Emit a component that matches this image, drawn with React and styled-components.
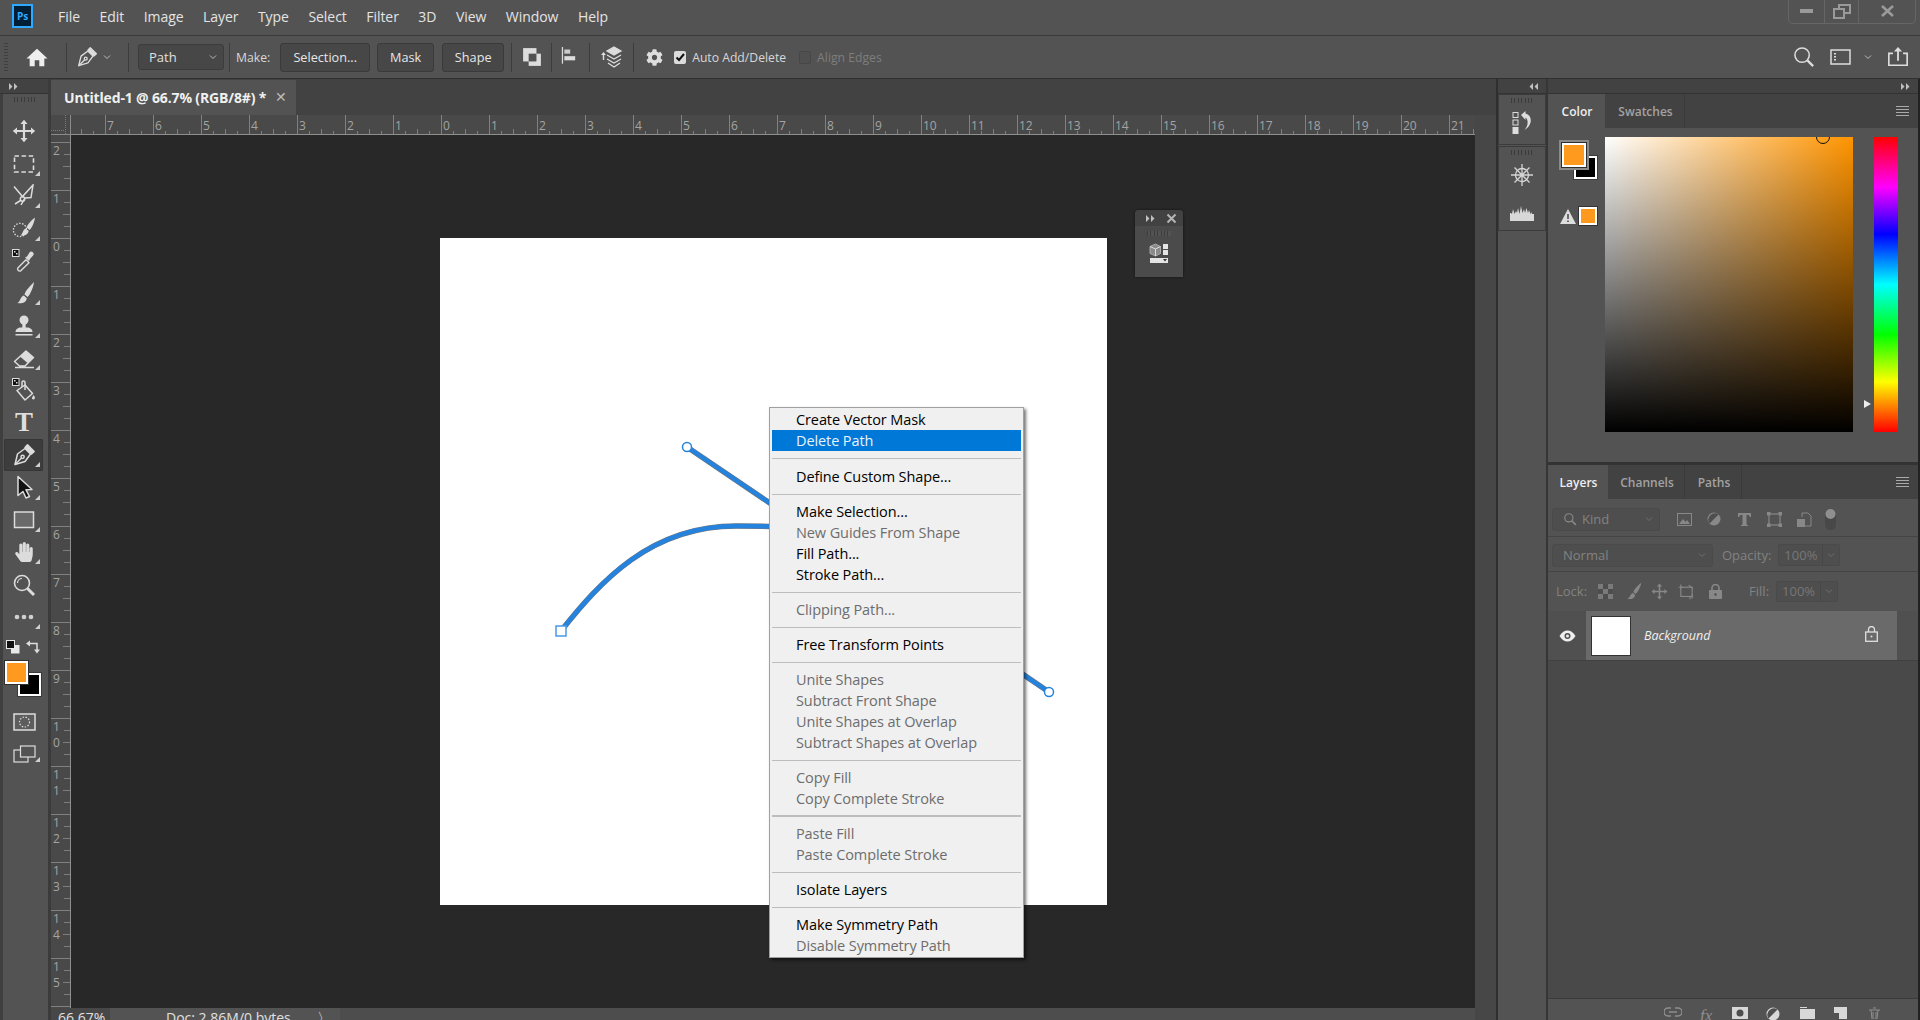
import React from 'react';
import styled, { createGlobalStyle } from 'styled-components';
import { FaCog, FaHandPaper } from 'react-icons/fa';

const UI = '"Open Sans","Noto Sans","Liberation Sans",sans-serif';
const G = createGlobalStyle`
  html,body{margin:0;padding:0;background:#535353;overflow:hidden;}
  #root{height:100vh;}
  *{box-sizing:border-box;}
`;
const App_ = styled.div`width:1920px;height:1020px;display:flex;flex-direction:column;overflow:hidden;background:#535353;font-family:${UI};font-size:13px;color:#e0e0e0;`;

/* Menu bar */
const MenuBar = styled.div`height:36px;flex:none;display:flex;align-items:center;padding-left:12px;border-bottom:1px solid #3c3c3c;position:relative;`;
const Logo = styled.div`width:21px;height:24px;border:2px solid #31a8ff;background:#001e36;color:#31a8ff;font-size:10px;font-weight:700;display:flex;align-items:center;justify-content:center;margin-right:25px;margin-top:-4px;`;
const MenuItems = styled.div`display:flex;gap:19.5px;font-size:14px;color:#e4e4e4;margin-top:-2px;letter-spacing:-.05px;`;
const WinControls = styled.div`margin-left:auto;margin-right:4px;width:128px;height:24px;margin-top:-12px;border:1px solid #666;border-top:none;border-radius:0 0 5px 5px;display:grid;grid-template-columns:35px 34px 1fr;`;
const WinBtn = styled.div`display:flex;align-items:center;justify-content:center;border-left:${p=>p.$first?'none':'1px solid #666'};`;

/* Options */
const Options = styled.div`height:43px;flex:none;display:flex;align-items:center;position:relative;border-bottom:1px solid #2f2f2f;padding-left:4px;`;
const Grip = styled.div`width:4px;height:28px;flex:none;background:repeating-linear-gradient(#3f3f3f 0 1px,transparent 1px 3px);`;
const HomeSlot = styled.div`width:58px;display:flex;justify-content:center;flex:none;`;
const VSep = styled.div`width:1px;height:29px;background:#3c3c3c;flex:none;margin:${p=>p.$m||'0'};`;
const PenSlot = styled.div`width:61px;display:flex;align-items:center;gap:5px;padding-left:9px;flex:none;`;
const PathSelect = styled.div`width:86px;height:26px;margin-left:9px;margin-right:5px;background:#474747;border:1px solid #3c3c3c;border-radius:3px;display:flex;align-items:center;justify-content:space-between;padding:0 6px 0 10px;font-size:13px;flex:none;`;
const OptLabel = styled.span`font-size:12.2px;color:${p=>p.$dim?'#7e7e7e':'#d8d8d8'};margin-left:${p=>p.$ml||0}px;flex:none;`;
const OptBtn = styled.div`height:29px;width:${p=>p.$w}px;margin-left:${p=>p.$ml}px;border:1px solid #3a3a3a;border-radius:3px;background:#474747;display:flex;align-items:center;justify-content:center;font-size:12.7px;color:#e6e6e6;flex:none;`;
const OptIcon = styled.div`width:${p=>p.$w}px;flex:none;display:flex;justify-content:center;align-items:center;position:relative;`;
const Check = styled.div`width:12px;height:13px;border-radius:2px;flex:none;margin-left:${p=>p.$ml||0}px;background:${p=>p.$on?'#dcdcdc':'#505050'};border:${p=>p.$on?'none':'1px solid #474747'};display:flex;align-items:center;justify-content:center;`;
const OptRight = styled.div`margin-left:auto;display:flex;align-items:center;margin-right:2px;`;

/* Workspace */
const Workspace = styled.div`flex:1;min-height:0;display:flex;`;
const LeftCol = styled.div`width:51px;flex:none;display:flex;flex-direction:column;border-right:3px solid #3b3b3b;`;
const Collapse = styled.div`height:15px;flex:none;background:#424242;display:flex;align-items:center;padding-left:9px;border-bottom:1px solid #333;justify-content:${p=>p.$end?'flex-end':'flex-start'};padding-right:${p=>p.$end?'8px':'0'};`;
const ToolBox = styled.div`flex:1;border-left:3px solid #3f3f3f;display:flex;flex-direction:column;align-items:stretch;position:relative;`;
const Gripper = styled.div`width:${p=>p.$w||23}px;height:5px;flex:none;margin:${p=>p.$m||'3px auto 0'};background:repeating-linear-gradient(to right,#3b3b3b 0 1px,#535353 1px 3.4px);`;
const ToolList = styled.div`margin-top:13px;display:flex;flex-direction:column;`;
const Tool = styled.div`height:32.4px;margin:0 ${p=>p.$active?'5px':'0'} 0 ${p=>p.$active?'1px':'0'};padding-right:${p=>p.$active?'0':'3px'};display:flex;align-items:center;justify-content:center;position:relative;border-radius:2px;
  background:${p=>p.$active?'#3d3d3d':'transparent'};
  ${p=>p.$active?'box-shadow:inset 0 0 0 1px #363636;':''}
  ${p=>p.$fly?`&::after{content:'';position:absolute;right:${p.$active?3:8}px;bottom:4px;border-bottom:5px solid #cfcfcf;border-left:5px solid transparent;}`:''}`;
const TypeGlyph = styled.span`font-family:"Liberation Serif",serif;font-size:27px;line-height:1;color:#dedede;font-weight:700;`;
const ColorTools = styled.div`display:flex;justify-content:space-between;padding:0 8px 0 3px;margin-top:7px;height:14px;`;
const FgSwatch = styled.div`width:${p=>p.$s}px;height:${p=>p.$s}px;background:#ff9a1f;border:2px solid #fff;box-shadow:0 0 0 1px #2e2e2e${p=>p.$halo?',0 0 0 3px #8a8a8a':''};position:relative;z-index:1;`;
const BgSwatch = styled.div`width:${p=>p.$s}px;height:${p=>p.$s}px;background:#000;border:2px solid #fff;outline:1px solid #3a3a3a;margin:${p=>p.$m};`;
const ToolSwatches = styled.div`padding-left:2px;margin-top:7px;height:36px;`;
const ModeIcon = styled.div`height:${p=>p.$h}px;margin-top:${p=>p.$mt||0}px;padding-right:3px;display:flex;align-items:center;justify-content:center;position:relative;
 ${p=>p.$fly?`&::after{content:'';position:absolute;right:8px;bottom:2px;border-bottom:5px solid #cfcfcf;border-left:5px solid transparent;}`:''}`;

/* Document area */
const DocArea = styled.div`flex:1;min-width:0;display:flex;flex-direction:column;background:#424242;border-right:2px solid #2f2f2f;`;
const TabBar = styled.div`height:36px;flex:none;background:#424242;display:flex;padding-top:1px;`;
const DocTab = styled.div`width:245px;background:#535353;display:flex;align-items:center;padding-left:13px;font-weight:700;font-size:14px;color:#f0f0f0;letter-spacing:-.15px;`;
const TabClose = styled.span`margin-left:9px;color:#bbb;font-size:14px;font-weight:400;margin-top:-3px;`;
const DocMain = styled.div`flex:1;min-height:0;display:flex;`;
const DocCenter = styled.div`flex:1;min-width:0;display:flex;flex-direction:column;`;
const DocScrollV = styled.div`width:21px;flex:none;background:#474747;`;
const RulerRow = styled.div`height:20px;flex:none;display:flex;background:#494949;`;
const Corner = styled.div`width:20px;flex:none;border-right:1px solid #8a8a8a;border-bottom:1px solid #8a8a8a;background:repeating-linear-gradient(to right,#7a7a7a 0 1px,transparent 1px 2px) 0 15px/14px 1px no-repeat,repeating-linear-gradient(#7a7a7a 0 1px,transparent 1px 2px) 14px 0/1px 20px no-repeat;`;
const TopRuler = styled.div`flex:1;min-width:0;display:flex;overflow:hidden;border-bottom:1px solid #8f8f8f;`;
const TopCell = styled.div`flex:0 0 48px;margin-left:${p=>p.$ml||0}px;border-left:1px solid #808080;padding-left:1px;font-size:12px;line-height:22px;color:#a4a4a4;
  background:linear-gradient(#7e7e7e,#7e7e7e) 11px 100%/1px 3px no-repeat,linear-gradient(#7e7e7e,#7e7e7e) 23px 100%/1px 5px no-repeat,linear-gradient(#7e7e7e,#7e7e7e) 35px 100%/1px 3px no-repeat;`;
const DocBody = styled.div`flex:1;min-height:0;display:flex;`;
const LeftRuler = styled.div`width:20px;flex:none;background:#494949;overflow:hidden;display:flex;flex-direction:column;border-right:1px solid #8f8f8f;`;
const LeftCell = styled.div`flex:0 0 48px;margin-top:${p=>p.$mt||0}px;border-top:1px solid #808080;padding-left:2px;font-size:12px;line-height:16px;color:#a4a4a4;display:flex;flex-direction:column;
  background:linear-gradient(#7e7e7e,#7e7e7e) 100% 11px/6px 1px no-repeat,linear-gradient(#7e7e7e,#7e7e7e) 100% 23px/7px 1px no-repeat,linear-gradient(#7e7e7e,#7e7e7e) 100% 35px/6px 1px no-repeat;`;
const Canvas = styled.div`flex:1;min-width:0;background:#282828;position:relative;padding:103px 0 0 369px;overflow:hidden;`;
const DocPage = styled.div`width:667px;height:667px;background:#fff;position:relative;`;
const PathSvg = styled.svg`position:absolute;left:0;top:0;overflow:visible;`;
const FloatPanel = styled.div`position:absolute;left:1064px;top:75px;width:48px;height:67px;background:#4b4b4b;border-radius:4px 4px 0 0;box-shadow:0 0 3px rgba(0,0,0,.5);display:flex;flex-direction:column;align-items:center;`;
const FloatHead = styled.div`height:16px;width:100%;flex:none;background:#424242;border-radius:4px 4px 0 0;display:flex;align-items:center;justify-content:space-between;padding:0 6px 0 11px;color:#bbb;`;
const FloatIcon = styled.div`margin-top:7px;`;
const ContextMenu = styled.div`position:absolute;left:698px;top:272px;width:255px;height:551px;background:#f0f0f0;border:1px solid #a0a0a0;padding:1px 2px;box-shadow:2px 2px 3px rgba(0,0,0,.55);font-size:14.5px;color:#000;letter-spacing:-.1px;`;
const MItem = styled.div`height:21px;line-height:21px;padding-left:24px;color:${p=>p.$sel?'#e8f2fb':p.$dis?'#6d6d6d':'#000'};background:${p=>p.$sel?'#0078d7':'transparent'};white-space:nowrap;`;
const MSep = styled.div`height:${p=>p.$h||14}px;display:flex;align-items:center;&::before{content:'';flex:1;height:${p=>p.$thick?2:1}px;background:#bdbdbd;}`;
const StatusBar = styled.div`height:12px;flex:none;display:flex;background:#4d4d4d;overflow:hidden;font-size:14px;line-height:20px;color:#e0e0e0;`;
const StatusZoom = styled.div`width:59px;padding-left:7px;flex:none;background:#474747;`;
const StatusDoc = styled.div`width:230px;padding-left:56px;flex:none;background:#535353;position:relative;display:flex;justify-content:space-between;padding-right:9px;`;

/* Right */
const Strip = styled.div`width:50px;flex:none;display:flex;flex-direction:column;border-right:2px solid #363636;`;
const StripBox = styled.div`height:${p=>p.$h}px;flex:none;border:1px solid #3c3c3c;margin-bottom:1px;display:flex;flex-direction:column;align-items:center;`;
const StripIcon = styled.div`margin-top:${p=>p.$mt}px;`;
const StripFill = styled.div`flex:1;`;
const Panels = styled.div`width:372px;flex:none;display:flex;flex-direction:column;border-right:2px solid #222;`;
const ColorPanel = styled.div`height:371px;flex:none;display:flex;flex-direction:column;border-bottom:3px solid #333;`;
const TabStrip = styled.div`height:34px;flex:none;display:flex;background:#424242;position:relative;font-weight:600;font-size:12px;`;
const PTab = styled.div`width:${p=>p.$w}px;display:flex;align-items:center;justify-content:center;padding-left:2px;background:${p=>p.$on?'#535353':'transparent'};color:${p=>p.$on?'#eee':'#a2a2a2'};border-right:1px solid ${p=>p.$on?'transparent':'#3a3a3a'};`;
const Hamburger = styled.div`margin-left:auto;margin-right:9px;align-self:center;width:13px;height:10px;background:repeating-linear-gradient(#aaa 0 1px,transparent 1px 3px);`;
const ColorBody = styled.div`flex:1;display:flex;padding-top:9px;`;
const ColorLeft = styled.div`width:57px;flex:none;display:flex;flex-direction:column;padding:6px 0 0 14px;`;
const Warn = styled.div`display:flex;align-items:center;gap:3px;margin-top:28px;margin-left:-2px;`;
const SmallSwatch = styled.div`width:18px;height:18px;background:#ff9a1f;border:2px solid #fff;outline:1px solid #333;`;
const Picker = styled.div`width:248px;height:295px;flex:none;position:relative;overflow:hidden;background:linear-gradient(to top,#000,rgba(0,0,0,0)),linear-gradient(to right,#fff,#ff9400);`;
const PickerRing = styled.div`position:absolute;left:211px;top:-7px;width:14px;height:14px;border-radius:50%;border:1.5px solid #111;`;
const Hue = styled.div`width:24px;height:295px;margin-left:21px;flex:none;position:relative;background:linear-gradient(#f00 0%,#f0f 17%,#00f 33%,#0ff 50%,#0f0 67%,#ff0 83%,#f00 100%);`;
const HueMark = styled.div`position:absolute;left:-10px;top:263px;border-left:7px solid #eee;border-top:4px solid transparent;border-bottom:4px solid transparent;`;
const LayersPanel = styled.div`flex:1;min-height:0;display:flex;flex-direction:column;`;
const FilterRow = styled.div`height:${p=>p.$h}px;flex:none;display:flex;align-items:center;padding-left:4px;padding-top:${p=>p.$pt||0}px;border-bottom:1px solid ${p=>p.$nb?'transparent':'#444'};color:#858585;`;
const DimSelect = styled.div`width:${p=>p.$w}px;height:23px;flex:none;border:1px solid #4a4a4a;border-radius:3px;display:flex;align-items:center;padding:0 6px 0 10px;font-size:13px;color:#828282;background:#4e4e4e;gap:5px;`;
const Push = styled.div`margin-left:auto;display:flex;`;
const FIcon = styled.div`width:${p=>p.$w||30}px;margin-left:${p=>p.$ml||0}px;flex:none;display:flex;justify-content:center;`;
const DimLabel = styled.span`font-size:13px;color:#828282;flex:none;margin-left:${p=>p.$ml||0}px;`;
const DimInput = styled.div`width:62px;height:${p=>p.$h||22}px;margin-left:7px;flex:none;display:flex;border:1px solid #4a4a4a;background:#4e4e4e;border-radius:2px;font-size:13px;color:#777;`;
const InputVal = styled.div`width:44px;display:flex;align-items:center;justify-content:center;border-right:1px solid #474747;`;
const InputArrow = styled.div`flex:1;display:flex;align-items:center;justify-content:center;`;
const LayerList = styled.div`flex:1;min-height:0;background:#494949;display:flex;flex-direction:column;`;
const LayerRow = styled.div`height:50px;flex:none;display:flex;border-bottom:1px solid #414141;background:#505050;`;
const Eye = styled.div`width:38px;flex:none;display:flex;align-items:center;justify-content:center;`;
const LayerMain = styled.div`width:311px;flex:none;background:#6a6a6a;display:flex;align-items:center;padding-left:5px;`;
const Thumb = styled.div`width:40px;height:40px;flex:none;background:#fff;border:1px solid #333;`;
const LayerName = styled.span`font-style:italic;font-size:12.5px;color:#f0f0f0;margin-left:13px;`;
const LayerLock = styled.div`margin-left:auto;margin-right:19px;`;
const LayerScroll = styled.div`flex:1;background:#494949;`;
const BottomBar = styled.div`height:22px;flex:none;border-top:1px solid #3a3a3a;overflow:hidden;display:flex;justify-content:flex-end;align-items:flex-start;padding:8px 27px 0 0;gap:0;`;
const BotIcon = styled.div`width:33.6px;flex:none;display:flex;justify-content:center;`;
const Fx = styled.span`font-family:"Liberation Serif",serif;font-style:italic;font-size:17px;line-height:17px;color:#8f8f8f;`;

/* Icons */
const C = '#dcdcdc';
const Svg = ({s=24,w,h,vb='0 0 24 24',children,...r}) => <svg width={w||s} height={h||s} viewBox={vb} fill="none" {...r}>{children}</svg>;
const Chev = ({c='#bcbcbc',s=8}) => <Svg s={s} vb="0 0 8 8"><path d="M1 2.5L4 5.5L7 2.5" stroke={c}/></Svg>;
const Dbl = ({left}) => <Svg w={9} h={7} vb="0 0 9 7" style={left?{transform:'scaleX(-1)'}:undefined}><path d="M0 0l3.5 3.5L0 7zM5 0l3.5 3.5L5 7z" fill="#c0c0c0"/></Svg>;
const Pen = ({s=24}) => <Svg s={s}><g stroke={C} strokeWidth="1.5" strokeLinejoin="round"><path d="M3 21.5L5.5 11L13 5.5L18.5 11L13 18.5Z"/><path d="M13 4.5L15.5 1.8L22.2 8.5L19.5 11Z" fill={C}/><path d="M3 21.5L9.5 15"/><circle cx="10.6" cy="13.8" r="1.6"/></g></Svg>;
const Badge = () => <><rect x="0.5" y="0.5" width="6.5" height="7" fill="#111" stroke={C}/><rect x="2" y="2" width="1.5" height="1.5" fill={C}/><rect x="4" y="4" width="1.5" height="1.5" fill={C}/></>;
const Icons = [
 <Svg><path fill={C} d="M12 .8l3.6 4.2h-2.5v5.9H19V8.4l4.2 3.6L19 15.6v-2.5h-5.9V19h2.5L12 23.2 8.4 19h2.5v-5.9H5v2.5L.8 12 5 8.4v2.5h5.9V5H8.4z"/></Svg>,
 <Svg><rect x="2.5" y="4" width="19" height="16" stroke={C} strokeWidth="1.6" strokeDasharray="4.5 2.6"/></Svg>,
 <Svg><g stroke={C} strokeWidth="1.5"><path d="M2 2.5L10.5 12.5L21 1L19 13.5L13 14L9 21"/><circle cx="10.5" cy="15" r="2.2"/><path d="M8.5 16.5L3 20"/></g></Svg>,
 <Svg><circle cx="8" cy="14" r="6.6" stroke={C} strokeWidth="1.3" strokeDasharray="1.5 1.5"/><path fill={C} d="M23 1.5C20 3.5 15.5 8.5 14.5 11.5l3 2.5C20.5 11.5 22.5 5.5 23 1.5zM13.8 12.5c-3 .7-2.8 5.5-5.3 6.8 3 1 7.5 0 8.2-4.2z"/></Svg>,
 <Svg><Badge/><path stroke={C} strokeWidth="1.4" d="M8.5 22c-2 .5-3.5-1.5-2.7-3L14 10.8l3 3L9 21.5z" strokeLinejoin="round"/><path fill={C} d="M13 8.5l2-1 2.5-4c1.2-2.2 5-.2 4 2.4l-3.5 4-1 2.2z"/></Svg>,
 <Svg><path fill={C} d="M22 1C19 4 13.5 9.5 12.5 13.5l3.2 2.6C18.5 13 21.5 6 22 1zM11.8 14.5c-3.3.8-3.2 5.6-6.3 7.5 3.7.8 8.7 0 9.3-4.8z"/></Svg>,
 <Svg><g fill={C}><circle cx="12" cy="6" r="4.5"/><rect x="10.3" y="9" width="3.4" height="5"/><path d="M3.5 18c0-3 3-4.5 5-4.5h7c2 0 5 1.5 5 4.5z"/><rect x="3.5" y="20" width="17" height="1.5"/></g></Svg>,
 <Svg><path stroke={C} strokeWidth="1.5" d="M2.5 15.5L14 5l7.5 6.5L13 20H7.5z M3 21.5H22" strokeLinejoin="round"/><path fill={C} d="M8 10.5L14 5l7.5 6.5L15.5 17z"/></Svg>,
 <Svg><Badge/><g stroke={C} strokeWidth="1.5" strokeLinejoin="round"><path d="M5 12.5L13 7l7.500 8.500L13 22z"/><path d="M10 9V4.500a1.500 1.500 0 013 0V12"/></g><path fill={C} d="M21.500 17c1 1.500 2 2.800 1 4-1 1-2.800.2-2.500-1.300z"/></Svg>,
 <TypeGlyph>T</TypeGlyph>,
 <Pen/>,
 <Svg><path fill="#111" stroke={C} strokeWidth="1.5" d="M6 1.500L20 14.500L14 14.800L17.500 21.500L14 23L11 16.500L6 20.500Z" strokeLinejoin="round"/></Svg>,
 <Svg><rect x="2.5" y="4" width="19" height="15.5" fill="#6a6a6a" stroke={C} strokeWidth="1.5"/></Svg>,
 <FaHandPaper size={20} color={C}/>,
 <Svg><circle cx="10" cy="10" r="7.5" stroke={C} strokeWidth="1.6"/><path stroke={C} strokeWidth="1.2" d="M5.500 10a4.500 4.500 0 014.500-4.500"/><path stroke={C} strokeWidth="3" d="M15.500 15.500L22 22"/></Svg>,
 <Svg><g fill="#d0d0d0"><circle cx="5" cy="12" r="2.3"/><circle cx="12" cy="12" r="2.3"/><circle cx="19" cy="12" r="2.3"/></g></Svg>,
];
const fly = [0,1,1,1,0,1,1,1,0,0,1,1,1,1,0,1];

const menu = [
 ['Create Vector Mask'],['Delete Path','sel'],'-15',['Define Custom Shape...'],'-',['Make Selection...'],['New Guides From Shape','dis'],['Fill Path...'],['Stroke Path...'],'-',['Clipping Path...','dis'],'-',['Free Transform Points'],'-',['Unite Shapes','dis'],['Subtract Front Shape','dis'],['Unite Shapes at Overlap','dis'],['Subtract Shapes at Overlap','dis'],'-',['Copy Fill','dis'],['Copy Complete Stroke','dis'],'=',['Paste Fill','dis'],['Paste Complete Stroke','dis'],'-',['Isolate Layers'],'-',['Make Symmetry Path'],['Disable Symmetry Path','dis'],
];
const topNums = ['',7,6,5,4,3,2,1,0,1,2,3,4,5,6,7,8,9,10,11,12,13,14,15,16,17,18,19,20,21,22];
const leftNums = ['',2,1,0,1,2,3,4,5,6,7,8,9,10,11,12,13,14,15,16,17];
const menus = ['File','Edit','Image','Layer','Type','Select','Filter','3D','View','Window','Help'];
const CURVE = 'M561 631C600 582 650 526 736 526S775 529 800 535';

export default function App(){
 return <App_><G/>
  <MenuBar>
   <Logo>Ps</Logo>
   <MenuItems>{menus.map(m=><span key={m}>{m}</span>)}</MenuItems>
   <WinControls>
    <WinBtn $first><Svg w={14} h={5} vb="0 0 14 5"><rect width="13" height="4" fill="#9a9a9a"/></Svg></WinBtn>
    <WinBtn><Svg w={18} h={15} vb="0 0 18 15"><g stroke="#9a9a9a" strokeWidth="2"><rect x="6" y="1" width="11" height="8"/><rect x="1" y="5" width="10" height="9" fill="#535353"/></g></Svg></WinBtn>
    <WinBtn><Svg w={13} h={12} vb="0 0 13 12"><path stroke="#9a9a9a" strokeWidth="2.6" d="M1 1l11 10M12 1L1 11"/></Svg></WinBtn>
   </WinControls>
  </MenuBar>
  <Options>
   <Grip/>
   <HomeSlot><Svg s={22}><path fill="#eee" d="M12 3L23.500 13.500H20V22H14.500V15.500H9.500V22H4V13.500H.5z"/></Svg></HomeSlot>
   <VSep/>
   <PenSlot><Pen s={22}/><Chev/></PenSlot>
   <VSep/>
   <PathSelect>Path<Chev/></PathSelect>
   <VSep/>
   <OptLabel $ml={6}>Make:</OptLabel>
   <OptBtn $w={90} $ml={10}>Selection...</OptBtn>
   <OptBtn $w={57} $ml={7}>Mask</OptBtn>
   <OptBtn $w={62} $ml={8}>Shape</OptBtn>
   <VSep $m="0 0 0 7px"/>
   <OptIcon $w={39}><Svg s={20} vb="0 0 18 18"><rect x="1" y="1" width="12" height="12" fill="#ddd"/><rect x="6" y="6" width="11" height="11" fill="#ddd"/><rect x="6" y="6" width="7" height="7" fill="#535353"/></Svg></OptIcon>
   <VSep/>
   <OptIcon $w={37}><Svg s={20}><rect x="1" y="0" width="1.5" height="20" fill="#ddd"/><rect x="4" y="3" width="7" height="5" fill="#ccc"/><rect x="4" y="11" width="13" height="5" fill="#ddd"/></Svg></OptIcon>
   <VSep/>
   <OptIcon $w={43}><Svg s={24}><g stroke="#ddd" strokeWidth="1.3" fill="none"><path d="M14 2l7 4-7 4-7-4z" fill="#ddd"/><path d="M7 10l7 4 7-4M7 14l7 4 7-4M8 18l6 4 6-4"/></g><path fill="#ddd" d="M1 10l2.500-3L6 10H4.200v5H2.800v-5z"/></Svg></OptIcon>
   <VSep/>
   <OptIcon $w={40}><FaCog size={17} color="#dedede"/></OptIcon>
   <Check $on><Svg s={10} vb="0 0 10 10"><path d="M1.500 5.500l2.500 2.500 5-6" stroke="#111" strokeWidth="2"/></Svg></Check>
   <OptLabel $ml={6}>Auto Add/Delete</OptLabel>
   <Check $ml={13}/>
   <OptLabel $ml={6} $dim>Align Edges</OptLabel>
   <OptRight>
    <OptIcon $w={36}><Svg s={23}><circle cx="9.5" cy="9.5" r="7.5" stroke="#ddd" strokeWidth="1.6"/><path stroke="#ddd" strokeWidth="2.4" d="M15 15l6 6"/></Svg></OptIcon>
    <OptIcon $w={36}><Svg w={21} h={16} vb="0 0 21 16"><rect x="1" y="1" width="19" height="14" stroke="#ddd" strokeWidth="1.5"/><path stroke="#ddd" strokeDasharray="1.500 1.500" strokeWidth="2" d="M5 4v8"/></Svg></OptIcon>
    <OptIcon $w={20}><Chev/></OptIcon>
    <OptIcon $w={40}><Svg s={22}><path stroke="#ddd" strokeWidth="1.8" d="M6.500 8H2v13h20V8h-4.500"/><path fill="#ddd" d="M12 1l4.500 5H13v10h-2V6H7.500z"/></Svg></OptIcon>
   </OptRight>
  </Options>
  <Workspace>
   <LeftCol>
    <Collapse><Dbl/></Collapse>
    <ToolBox>
     <Gripper/>
     <ToolList>{Icons.map((ic,i)=><Tool key={i} $active={i===10} $fly={fly[i]===1}>{ic}</Tool>)}</ToolList>
     <ColorTools>
      <Svg s={14} vb="0 0 14 14"><rect x="5" y="5" width="8.500" height="8.500" fill="#e8e8e8"/><rect x=".5" y=".5" width="8" height="8" fill="#111" stroke="#e8e8e8"/></Svg>
      <Svg s={14} vb="0 0 14 14"><path stroke="#ddd" strokeWidth="1.5" fill="none" d="M3 3.500H11V10"/><path fill="#ddd" d="M4 .5v6L0 3.500zM8 9.500h6l-3 4z"/></Svg>
     </ColorTools>
     <ToolSwatches>
      <FgSwatch $s={23}/>
      <BgSwatch $s={23} $m="-11px 0 0 13px"/>
     </ToolSwatches>
     <ModeIcon $h={20} $mt={15}><Svg w={23} h={18} vb="0 0 23 18"><rect x="1" y="1" width="21" height="16" stroke="#ddd" strokeWidth="1.5" fill="#5d5d5d"/><circle cx="11.500" cy="9" r="5" stroke="#ddd" strokeWidth="1.2" strokeDasharray="1.500 1.500"/></Svg></ModeIcon>
     <ModeIcon $h={20} $mt={12} $fly><Svg w={23} h={18} vb="0 0 23 18"><g stroke="#ddd" strokeWidth="1.2"><rect x="1" y="5" width="14" height="12"/><rect x="7.500" y="1" width="14.500" height="11" fill="#535353"/></g></Svg></ModeIcon>
    </ToolBox>
   </LeftCol>
   <DocArea>
    <TabBar><DocTab>Untitled-1 @ 66.7% (RGB/8#) *<TabClose>✕</TabClose></DocTab></TabBar>
    <DocMain>
     <DocCenter>
      <RulerRow>
       <Corner/>
       <TopRuler>{topNums.map((n,i)=><TopCell key={i} $ml={i===0?-14:0}>{n}</TopCell>)}</TopRuler>
      </RulerRow>
      <DocBody>
       <LeftRuler>{leftNums.map((n,i)=><LeftCell key={i} $mt={i===0?-41:0}>{String(n).split('').map((d,j)=><span key={j}>{d}</span>)}</LeftCell>)}</LeftRuler>
       <Canvas>
        <DocPage>
         <PathSvg width="667" height="667" viewBox="440 238 667 667">
          <g fill="none" strokeLinecap="butt">
           <path d="M687 447L1049 692" stroke="#777" strokeWidth="5.5"/>
           <path d="M687 447L1049 692" stroke="#2583dd" strokeWidth="4.5"/>
           <path d={CURVE} stroke="#777" strokeWidth="5.5"/>
           <path d={CURVE} stroke="#2583dd" strokeWidth="4.5"/>
          </g>
          <circle cx="687" cy="447" r="4.5" fill="#fff" stroke="#2583dd" strokeWidth="1.5"/>
          <circle cx="1049" cy="692" r="4.5" fill="#fff" stroke="#2583dd" strokeWidth="1.5"/>
          <rect x="556" y="626" width="10" height="10" fill="#fff" stroke="#4a9ae6" strokeWidth="1.5"/>
         </PathSvg>
        </DocPage>
        <FloatPanel>
         <FloatHead><Dbl/><Svg s={11} vb="0 0 11 11"><path stroke="#b5b5b5" strokeWidth="2" d="M1.500 1.500l8 8M9.500 1.500l-8 8"/></Svg></FloatHead>
         <Gripper $w={24} $m="5px auto 0"/>
         <FloatIcon><Svg w={20} h={20} vb="0 0 20 20"><path d="M1 3.500L6.500 1l5 2.500v7L6.500 13 1 10.500z" stroke="#aaa" fill="#8a8a8a"/><path d="M1 3.500L6.500 6l5-2.500M6.500 6v7" stroke="#dcdcdc"/><rect x="14" y="1" width="5" height="5" fill="#e4e4e4"/><rect x="14" y="7" width="5" height="5" fill="#e4e4e4"/><rect x="1" y="15" width="18" height="5" fill="#e4e4e4"/><path d="M14 16h4l-2 2.500z" fill="#333"/></Svg></FloatIcon>
        </FloatPanel>
        <ContextMenu>
         {menu.map((m,i)=> typeof m==='string'
          ? <MSep key={i} $thick={m==='='} $h={m==='-15'?15:14}/>
          : <MItem key={i} $sel={m[1]==='sel'} $dis={m[1]==='dis'}>{m[0]}</MItem>)}
        </ContextMenu>
       </Canvas>
      </DocBody>
      <StatusBar>
       <StatusZoom>66.67%</StatusZoom>
       <StatusDoc><span>Doc: 2.86M/0 bytes</span><span>〉</span></StatusDoc>
      </StatusBar>
     </DocCenter>
     <DocScrollV/>
    </DocMain>
   </DocArea>
   <Strip>
    <Collapse $end><Dbl left/></Collapse>
    <StripBox $h={51}>
     <Gripper $m="3px auto 0"/>
     <StripIcon $mt={8}><Svg w={20} h={24} vb="0 0 20 24"><g stroke="#ddd"><rect x="1" y="1.5" width="5" height="5"/><rect x="1" y="9" width="5" height="5"/><rect x="1" y="16.5" width="5" height="6" fill="#ddd"/></g><path fill="#ddd" d="M9 4L13.500 0v2.500c4.500 1 6 5 5 9-.7 3-3 6-6 7.500 2.500-3 3.500-6 3-9-.3-2-1.200-3-2-3.500V9z"/></Svg></StripIcon>
    </StripBox>
    <StripBox $h={85}>
     <Gripper $m="3px auto 0"/>
     <StripIcon $mt={8}><Svg s={24}><g stroke="#d4d4d4" strokeWidth="1.3"><circle cx="12" cy="12" r="6.5"/><path d="M12 1v22M1 12h22M4.500 4.500l15 15M19.500 4.500l-15 15"/></g></Svg></StripIcon>
     <StripIcon $mt={15}><Svg w={24} h={15} vb="0 0 24 15"><path fill="#d8d8d8" d="M0 15V7h1l1 1 1-5 1.500 5L6 5l1 2 1-5 1.500 6 1.500-8 1.500 7L14 3l1 4 1.500-5L18 7l1-3 1.500 4 1-2 .5 2h2v7z"/></Svg></StripIcon>
    </StripBox>
    <StripFill/>
   </Strip>
   <Panels>
    <Collapse $end><Dbl/></Collapse>
    <ColorPanel>
     <TabStrip><PTab $w={57} $on>Color</PTab><PTab $w={80}>Swatches</PTab><Hamburger/></TabStrip>
     <ColorBody>
      <ColorLeft>
       <FgSwatch $s={24} $halo/>
       <BgSwatch $s={23} $m="-11px 0 0 12px"/>
       <Warn>
        <Svg w={16} h={15} vb="0 0 16 15"><path fill="#ddd" d="M8 0l8 15H0z"/><path stroke="#444" strokeWidth="1.5" d="M8 5v5M8 11.500v1.500"/></Svg>
        <SmallSwatch/>
       </Warn>
      </ColorLeft>
      <Picker><PickerRing/></Picker>
      <Hue><HueMark/></Hue>
     </ColorBody>
    </ColorPanel>
    <LayersPanel>
     <TabStrip><PTab $w={60} $on>Layers</PTab><PTab $w={77}>Channels</PTab><PTab $w={57}>Paths</PTab><Hamburger/></TabStrip>
     <FilterRow $h={38} $pt={3}>
      <DimSelect $w={108}><Svg s={14}><circle cx="10" cy="10" r="7" stroke="#888" strokeWidth="2"/><path stroke="#888" strokeWidth="3" d="M15 15l7 7"/></Svg>Kind<Push><Chev c="#6e6e6e"/></Push></DimSelect>
      <FIcon $w={30} $ml={9}><Svg w={15} h={13} vb="0 0 15 13"><rect x=".5" y=".5" width="14" height="12" stroke="#888"/><path fill="#888" d="M2 11l4-5 2.500 3L10 7l3 4z"/></Svg></FIcon>
      <FIcon><Svg s={14} vb="0 0 14 14"><circle cx="7" cy="7" r="6.5" fill="#888"/><path d="M11.500 2.500L2.500 11.500A6.500 6.500 0 0111.500 2.500z" fill="#4e4e4e"/></Svg></FIcon>
      <FIcon><Svg s={15} vb="0 0 15 15"><path fill="#888" d="M1 1h13v4h-1.200c-.3-1.500-1-2.300-3.300-2.300V12.500l1.500.7V14H4v-.8l1.500-.7V2.700C3.200 2.700 2.500 3.500 2.200 5H1z"/></Svg></FIcon>
      <FIcon><Svg s={15} vb="0 0 15 15"><rect x="2" y="2" width="11" height="11" stroke="#888" strokeWidth="1.2"/><g fill="#888"><rect width="3.500" height="3.500"/><rect x="11.500" width="3.500" height="3.500"/><rect y="11.500" width="3.500" height="3.500"/><rect x="11.500" y="11.500" width="3.500" height="3.500"/></g></Svg></FIcon>
      <FIcon><Svg s={15} vb="0 0 15 15"><path stroke="#888" d="M5 5V1h6l3 3v10H8"/><rect x="0" y="7" width="8" height="8" fill="#888"/></Svg></FIcon>
      <FIcon $w={22}><Svg w={11} h={21} vb="0 0 11 21"><rect y="2" width="11" height="19" rx="5.5" fill="#484848"/><circle cx="5.500" cy="5" r="5" fill="#8f8f8f"/></Svg></FIcon>
     </FilterRow>
     <FilterRow $h={35} $pt={2}>
      <DimSelect $w={161}>Normal<Push><Chev c="#6e6e6e"/></Push></DimSelect>
      <DimLabel $ml={9}>Opacity:</DimLabel>
      <DimInput><InputVal>100%</InputVal><InputArrow><Chev c="#6e6e6e"/></InputArrow></DimInput>
     </FilterRow>
     <FilterRow $h={39} $nb>
      <DimLabel $ml={4}>Lock:</DimLabel>
      <FIcon $w={27} $ml={5}><Svg s={15} vb="0 0 15 15"><rect width="15" height="15" fill="#7a7a7a"/><g fill="#4e4e4e"><rect x="5" width="5" height="5"/><rect y="5" width="5" height="5"/><rect x="10" y="5" width="5" height="5"/><rect x="5" y="10" width="5" height="5"/></g></Svg></FIcon>
      <FIcon $w={27}><Svg s={18}><path fill="#888" d="M23 1C19 4 13.500 9.500 12.500 13.500l3.200 2.600C18.500 13 22.500 6 23 1zM11.800 14.500c-3.300.8-3.200 5.600-7.300 8 3.700.8 9.700 0 10.300-5.300z"/></Svg></FIcon>
      <FIcon $w={27}><Svg s={17}><path fill="#888" d="M12 .8l3.600 4.200h-2.500v5.900H19V8.400l4.200 3.600L19 15.600v-2.500h-5.900V19h2.500L12 23.200 8.400 19h2.500v-5.900H5v2.500L.8 12 5 8.400v2.500h5.900V5H8.400z"/></Svg></FIcon>
      <FIcon $w={27}><Svg s={17}><g stroke="#888" strokeWidth="1.6"><rect x="4" y="6" width="16" height="13"/><path d="M1 6h6M4 2v6M17 19v4M20 16v6M15 3l6 5"/></g></Svg></FIcon>
      <FIcon $w={30}><Svg s={15} vb="0 0 15 15"><rect x="1" y="6" width="13" height="9" rx="1" fill="#888"/><path stroke="#888" strokeWidth="1.6" d="M4 7V4a3.500 3.500 0 017 0v3" fill="none"/><circle cx="7.500" cy="10.500" r="1.200" fill="#4e4e4e"/></Svg></FIcon>
      <DimLabel $ml={19}>Fill:</DimLabel>
      <DimInput $h={21}><InputVal>100%</InputVal><InputArrow><Chev c="#6e6e6e"/></InputArrow></DimInput>
     </FilterRow>
     <LayerList>
      <LayerRow>
       <Eye><Svg w={17} h={12} vb="0 0 17 12"><path fill="#eee" d="M.5 6C3 2 5.500.5 8.500.5S14 2 16.500 6C14 10 11.500 11.500 8.500 11.500S3 10 .5 6z"/><circle cx="8.500" cy="6" r="3" fill="#505050"/><circle cx="8.500" cy="6" r="1.500" fill="#eee"/></Svg></Eye>
       <LayerMain>
        <Thumb/>
        <LayerName>Background</LayerName>
        <LayerLock><Svg w={13} h={16} vb="0 0 13 16"><rect x=".7" y="6" width="11.600" height="9.300" stroke="#e0e0e0" strokeWidth="1.3"/><path stroke="#e0e0e0" strokeWidth="1.3" d="M3.500 6V3.500a3 3 0 016 0V6"/><circle cx="6.500" cy="10.500" r="1" fill="#e0e0e0"/></Svg></LayerLock>
       </LayerMain>
      </LayerRow>
      <LayerScroll/>
     </LayerList>
     <BottomBar>
      <BotIcon><Svg w={18} h={10} vb="0 0 18 10"><path stroke="#8f8f8f" strokeWidth="1.5" d="M7 1H4a4 4 0 000 8h3M11 1h3a4 4 0 010 8h-3M5 5h8"/></Svg></BotIcon>
      <BotIcon><Fx>fx</Fx></BotIcon>
      <BotIcon><Svg w={16} h={12} vb="0 0 16 12"><rect width="16" height="12" fill="#d8d8d8"/><circle cx="8" cy="6" r="3.500" fill="#4f4f4f"/></Svg></BotIcon>
      <BotIcon><Svg s={14} vb="0 0 14 14"><circle cx="7" cy="7" r="6.5" fill="#d8d8d8"/><path d="M11.500 2.500L2.500 11.500A6.500 6.500 0 0111.500 2.500z" fill="#4f4f4f"/></Svg></BotIcon>
      <BotIcon><Svg w={15} h={12} vb="0 0 15 12"><path fill="#d8d8d8" d="M0 0h7v1H0zM0 2h15v10H0z"/></Svg></BotIcon>
      <BotIcon><Svg w={13} h={12} vb="0 0 13 12"><path fill="#d8d8d8" d="M6 0h7v12H5V6H0V0z"/></Svg></BotIcon>
      <BotIcon><Svg w={13} h={12} vb="0 0 13 12"><path stroke="#8f8f8f" d="M1 3h11M3 3l1 9h5l1-9M5 1h3M5 5v6M8 5v6"/></Svg></BotIcon>
     </BottomBar>
    </LayersPanel>
   </Panels>
  </Workspace>
 </App_>;
}
